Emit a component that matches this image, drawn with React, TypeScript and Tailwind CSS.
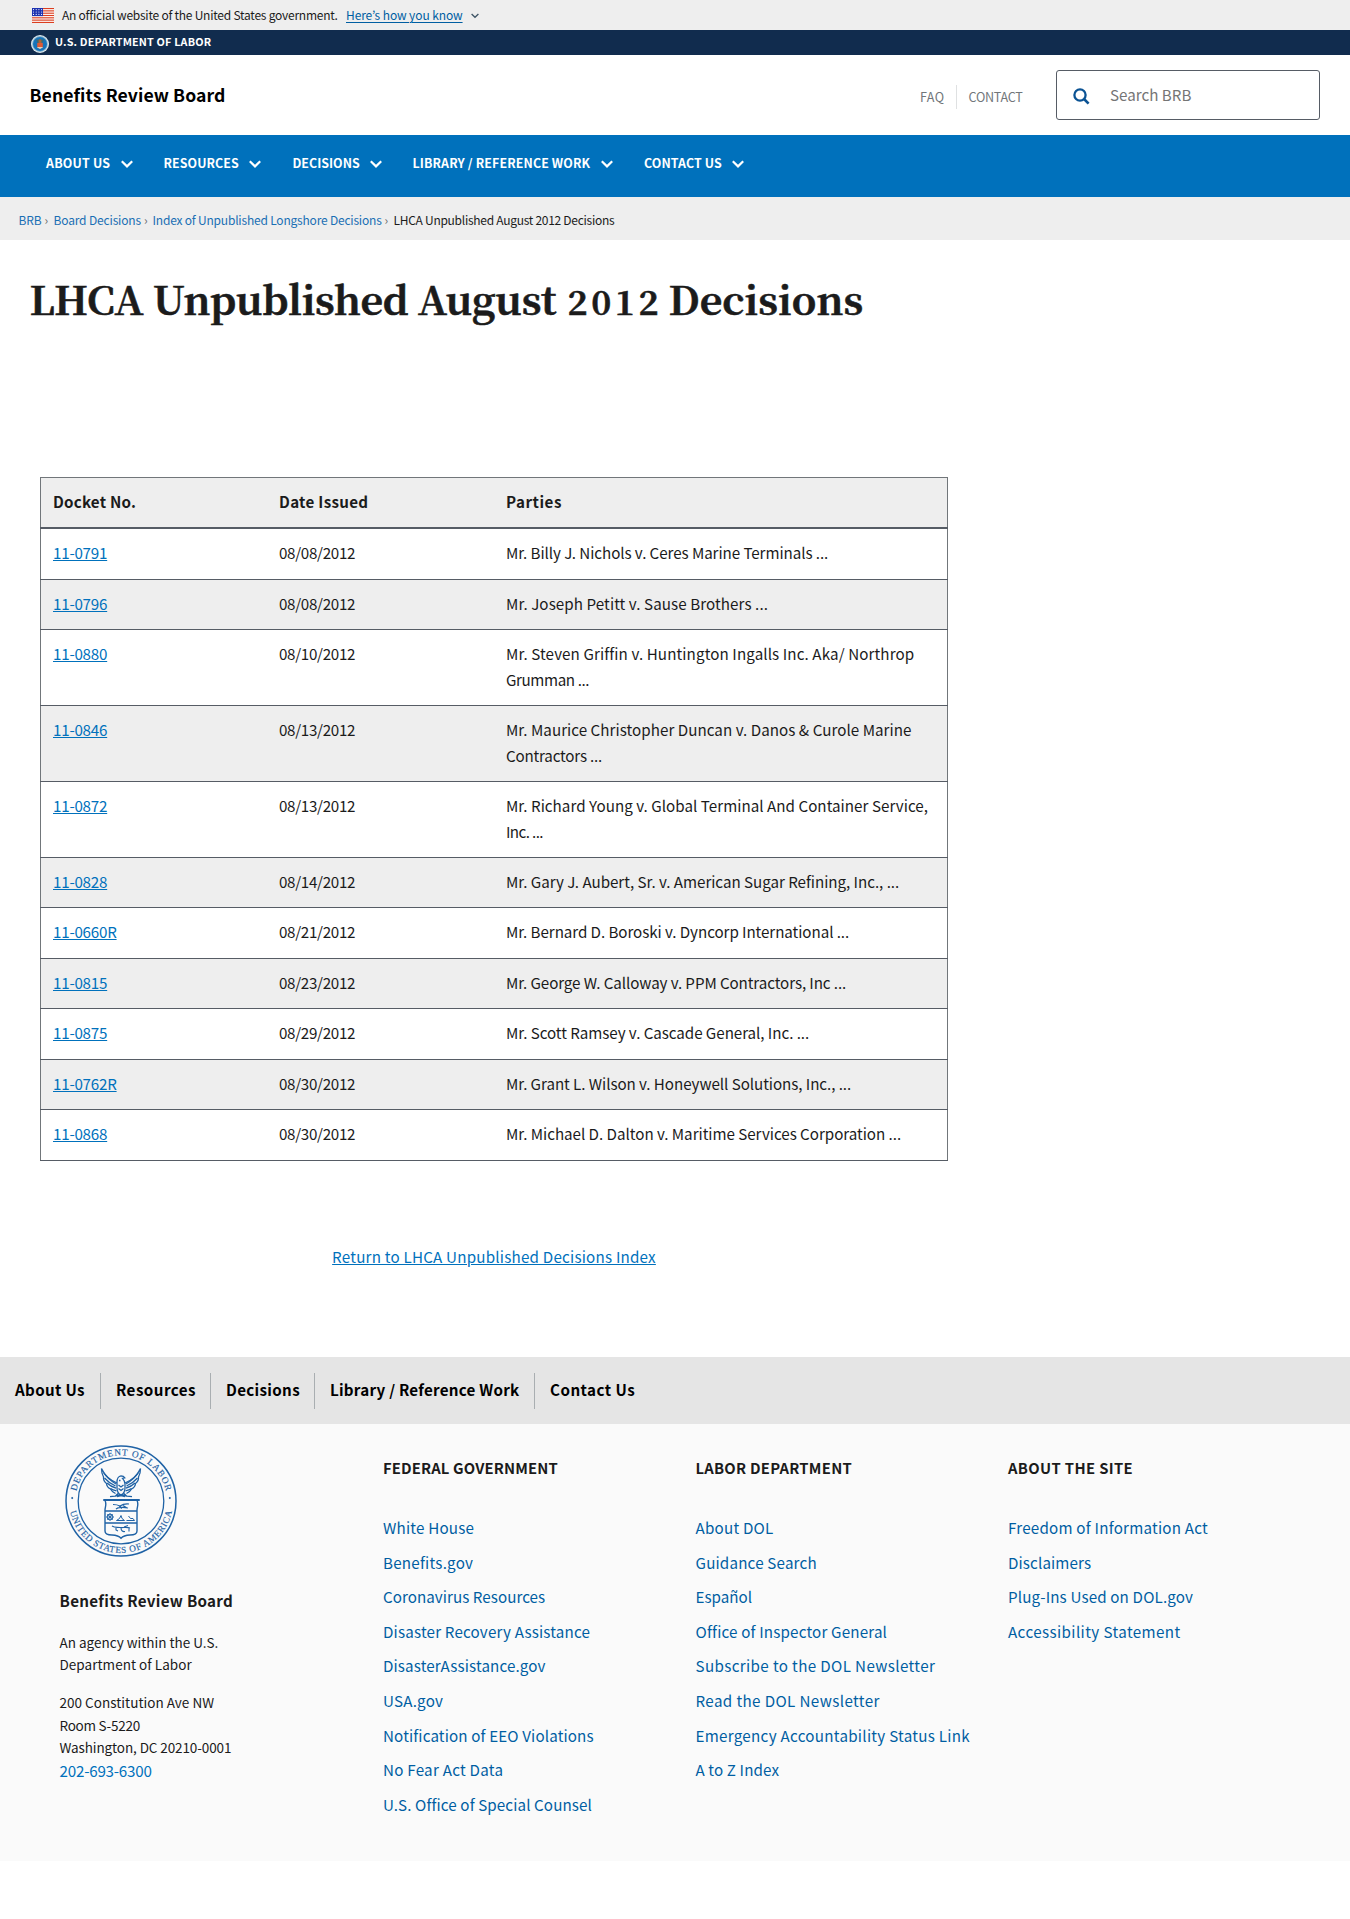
const SANS = "font-['Noto_Sans_CJK_JP','Noto_Sans',sans-serif]";

const mainNav = [
  { label: "ABOUT US", width: "w-[117.5px]", tracking: "tracking-[0.2px]" },
  { label: "RESOURCES", width: "w-[129px]", tracking: "tracking-[0.08px]" },
  { label: "DECISIONS", width: "w-[120px]", tracking: "tracking-[0.02px]" },
  { label: "LIBRARY / REFERENCE WORK", width: "w-[231.5px]", tracking: "tracking-[0.13px]" },
  { label: "CONTACT US", width: "w-[120px]", tracking: "tracking-[0.1px]" },
];

const docketTracking = "tracking-[-0.23px]";

const decisions = [
  { docket: "11-0791", date: "08/08/2012", lines: [["Mr. Billy J. Nichols v. Ceres Marine Terminals ...", "tracking-[-0.07px]"]] },
  { docket: "11-0796", date: "08/08/2012", lines: [["Mr. Joseph Petitt v. Sause Brothers ...", "tracking-[0.075px]"]] },
  {
    docket: "11-0880",
    date: "08/10/2012",
    lines: [
      ["Mr. Steven Griffin v. Huntington Ingalls Inc. Aka/ Northrop", "tracking-[0.1px]"],
      ["Grumman ...", "tracking-[-0.4px]"],
    ],
  },
  {
    docket: "11-0846",
    date: "08/13/2012",
    lines: [
      ["Mr. Maurice Christopher Duncan v. Danos & Curole Marine", "tracking-[0.036px]"],
      ["Contractors ...", "tracking-[-0.2px]"],
    ],
  },
  {
    docket: "11-0872",
    date: "08/13/2012",
    lines: [
      ["Mr. Richard Young v. Global Terminal And Container Service,", "tracking-[0.03px]"],
      ["Inc. ...", "tracking-[-0.6px]"],
    ],
  },
  { docket: "11-0828", date: "08/14/2012", lines: [["Mr. Gary J. Aubert, Sr. v. American Sugar Refining, Inc., ...", "tracking-[-0.036px]"]] },
  { docket: "11-0660R", date: "08/21/2012", lines: [["Mr. Bernard D. Boroski v. Dyncorp International ...", "tracking-[-0.07px]"]] },
  { docket: "11-0815", date: "08/23/2012", lines: [["Mr. George W. Calloway v. PPM Contractors, Inc ...", "tracking-[-0.097px]"]] },
  { docket: "11-0875", date: "08/29/2012", lines: [["Mr. Scott Ramsey v. Cascade General, Inc. ...", "tracking-[-0.052px]"]] },
  { docket: "11-0762R", date: "08/30/2012", lines: [["Mr. Grant L. Wilson v. Honeywell Solutions, Inc., ...", "tracking-[-0.061px]"]] },
  { docket: "11-0868", date: "08/30/2012", lines: [["Mr. Michael D. Dalton v. Maritime Services Corporation ...", "tracking-[-0.03px]"]] },
];

const footerNav = [
  { label: "About Us", width: "w-[101px]", tracking: "tracking-[0.32px]" },
  { label: "Resources", width: "w-[110px]", tracking: "tracking-[0.45px]" },
  { label: "Decisions", width: "w-[104px]", tracking: "tracking-[0.32px]" },
  { label: "Library / Reference Work", width: "w-[220px]", tracking: "tracking-[0.24px]" },
  { label: "Contact Us", width: "w-[110px]", tracking: "tracking-[0.47px]" },
];

const footerColumns = [
  {
    title: "FEDERAL GOVERNMENT",
    tracking: "tracking-[0.156px]",
    links: [
      ["White House", "tracking-[0.2px]"],
      ["Benefits.gov", "tracking-[0.23px]"],
      ["Coronavirus Resources", "tracking-[0.044px]"],
      ["Disaster Recovery Assistance", "tracking-[0.176px]"],
      ["DisasterAssistance.gov", "tracking-[0.122px]"],
      ["USA.gov", "tracking-[0.21px]"],
      ["Notification of EEO Violations", "tracking-[0.135px]"],
      ["No Fear Act Data", "tracking-[0.25px]"],
      ["U.S. Office of Special Counsel", "tracking-[0.11px]"],
    ],
  },
  {
    title: "LABOR DEPARTMENT",
    tracking: "tracking-[0.27px]",
    links: [
      ["About DOL", "tracking-[0.22px]"],
      ["Guidance Search", "tracking-[0.18px]"],
      ["Español", "tracking-[0.02px]"],
      ["Office of Inspector General", "tracking-[0.17px]"],
      ["Subscribe to the DOL Newsletter", "tracking-[0.37px]"],
      ["Read the DOL Newsletter", "tracking-[0.38px]"],
      ["Emergency Accountability Status Link", "tracking-[0.275px]"],
      ["A to Z Index", "tracking-[0.12px]"],
    ],
  },
  {
    title: "ABOUT THE SITE",
    tracking: "tracking-[0.36px]",
    links: [
      ["Freedom of Information Act", "tracking-[0.217px]"],
      ["Disclaimers", "tracking-[0.125px]"],
      ["Plug-Ins Used on DOL.gov", "tracking-[0.14px]"],
      ["Accessibility Statement", "tracking-[0.4px]"],
    ],
  },
];

function Flag() {
  return (
    <svg width="22" height="15" viewBox="0 0 22 15" className="shrink-0">
      <rect width="22" height="15" fill="#fff" />
      {[0, 1, 2, 3, 4, 5, 6].map((i) => (
        <rect key={i} y={i * 2.31} width="22" height="1.15" fill="#db3e1f" />
      ))}
      <rect width="11" height="8.1" fill="#1e33b1" />
      {[1.6, 4, 6.4].map((y) =>
        [1.5, 4.2, 6.9, 9.6].map((x) => <circle key={`${x}-${y}`} cx={x} cy={y} r="0.55" fill="#fff" />),
      )}
    </svg>
  );
}

function SmallSeal() {
  return (
    <svg width="18" height="18" viewBox="0 0 18 18" className="shrink-0">
      <circle cx="9" cy="9" r="9" fill="#dfe9ee" />
      <circle cx="9" cy="9" r="7.9" fill="#8ab6cf" />
      <circle cx="9" cy="9" r="7" fill="#1673b9" />
      <path d="M5 4.2 7.3 5 9 3.8l1.7 1.2L13 4.2 11.4 8H6.6z" fill="#3d6a72" />
      <path d="M7.8 4.6h2.4l.4 3.6H7.4z" fill="#a5653a" />
      <path d="M6.2 8h5.6v4.3L9 13.8l-2.8-1.5z" fill="#dd5a35" />
      <path d="M6.2 12h5.6v.6L9 14l-2.8-1.4z" fill="#d9d3c4" />
    </svg>
  );
}

function Chevron() {
  return (
    <svg width="12" height="8" viewBox="0 0 12 8" fill="none" className="shrink-0">
      <path d="M.8 1.300 6 6.400l5.200-5.100" stroke="#fff" strokeWidth="2.200" />
    </svg>
  );
}

function DepartmentSeal() {
  return (
    <svg width="112" height="112" viewBox="-56 -56 112 112" fill="none" stroke="#1f62a5" strokeWidth="1" className="block">
      <circle r="55" strokeWidth="1.5" />
      <circle r="42.8" strokeWidth="1.3" />
      <defs>
        <path id="seal-top" d="M-45.8 0A45.8 45.8 0 0 1 45.8 0" />
        <path id="seal-bottom" d="M-52 0A52 52 0 0 0 52 0" />
      </defs>
      <g fill="#1f62a5" stroke="#1f62a5" strokeWidth=".15" fontSize="9.2" fontFamily="'Liberation Serif', serif">
        <text textAnchor="middle" textLength="124" lengthAdjust="spacing">
          <textPath href="#seal-top" startOffset="50%" textLength="124" lengthAdjust="spacing">DEPARTMENT OF LABOR</textPath>
        </text>
        <text textAnchor="middle" textLength="142" lengthAdjust="spacing">
          <textPath href="#seal-bottom" startOffset="50%" textLength="142" lengthAdjust="spacing">UNITED STATES OF AMERICA</textPath>
        </text>
        <circle cx="-48.8" cy="-3" r="0.9" />
        <circle cx="48.8" cy="-3" r="0.9" />
      </g>
      {/* eagle */}
      <g strokeWidth="1.300">
        <path d="M-4-18C-9-20-16-25-19.500-32.500c0 4 .8 6.500 2 8.500-.2 2.500 1 5 3 6.500.2 2.500 1.800 4.500 4 5.500 1.200 2.500 3 3.500 5 4.500" />
        <path d="M4-18C9-20 16-25 19.500-32.500c0 4-.8 6.500-2 8.500.2 2.500-1 5-3 6.500-.2 2.500-1.800 4.500-4 5.500-1.200 2.500-3 3.500-5 4.500" />
        <path d="M-17.500-28.500C-14-23-10-20-5-17M-16.500-23c3 3.500 6.500 6 11 8M-14-18c2.500 2.500 5.500 4 9 5.200M-10.500-12.500c2 1.500 4 2 6 2.300M17.500-28.500C14-23 10-20 5-17M16.500-23c-3 3.500-6.500 6-11 8M14-18c-2.500 2.500-5.500 4-9 5.200M10.500-12.500c-2 1.500-4 2-6 2.300" />
        <path d="M-4-19c0-3 1.500-6 4-6.200 1.600 0 3 .7 3.800 2l-2.300.6c1.500 1.600 2.500 3 2.500 5.600v4c0 3-1.800 6-4 7.500-2.200-1.500-4-4.500-4-7.500zM-2.500-16l2.500 2 2.500-2M-2.500-12.500l2.500 2 2.500-2M-2-20.500h1.500" fill="#fafafa" />
        <path d="M-3-7.500-6-4.500M3-7.500l3 3M-11-4.300l5-.5L0-6.500l6 1.700 5 .5M-4-4.500l4-1 4 1" />
      </g>
      {/* shield */}
      <path d="M-17.500-.5v-1h36v1z" />
      <path d="M-16-.5C-14 3-16 6-16 9v21c0 3 3 4 7 4 4 .2 7 1 9 3.200 2-2.200 5-3 9-3.200 4 0 7-1 7-4V9c0-3 2-6 0-9.500M-16 10h32M-16 22h32" strokeWidth="1.400" />
      <path d="M-8 3.500c3 0 5 .5 7 1.500 3-2 5-2.500 9-2M-5 8c2-2 8-2 12-1M-2 5l3 2.500M2 4.500 6 7" strokeWidth="1.100" />
      <circle cx="-11" cy="16" r="2.900" />
      <path d="M-11 12v8M-15 16h8M-13.800 13.200l5.600 5.600M-8.200 13.200l-5.600 5.600" strokeWidth=".8" />
      <path d="M-4.500 19.500h8l-2.500-2-1-3-1.500 3zM5.500 19.500h8l-1.500-2H9.500l-2-2.500" />
      <path d="M-9 25c3 2 5 1 8 1.500s6-1 10 .5M-5 26v3l2 1M0 27c0 3 2 4 4 3.500M8 27v3.500M3 26l4-1.500" strokeWidth="1.100" />
    </svg>
  );
}

export default function App() {
  return (
    <div className={`${SANS} min-h-[1919px] w-[1350px] overflow-hidden bg-white text-[15.18px] leading-[25.44px] text-[#1b1b1b]`}>
      {/* government banner */}
      <div className="flex h-[30px] items-center bg-[#eeeeee] pl-8 text-xs leading-[30px]">
        <Flag />
        <span className="ml-2 w-[284px] whitespace-nowrap tracking-[-0.24px]">An official website of the United States government.</span>
        <a className="whitespace-nowrap tracking-[-0.1px] text-[#005ea2] underline decoration-1 underline-offset-2">Here’s how you know</a>
        <svg width="8" height="6" viewBox="0 0 8 6" fill="none" className="mt-[2px] ml-2">
          <path d="M.6 1 4 4.300 7.400 1" stroke="#3f5566" strokeWidth="1.300" />
        </svg>
      </div>
      <div className="flex h-[25px] bg-[#112c4e] pl-[31px] text-[10.8px] font-bold text-white">
        <div className="pt-[5px]"><SmallSeal /></div>
        <span className="ml-1.5 leading-[23px] tracking-[0.17px]">U.S. DEPARTMENT OF LABOR</span>
      </div>

      {/* site header */}
      <header className="flex h-20 items-center pr-[30px] pl-[29.500px]">
        <div className="flex-1 text-[17.6px] font-bold tracking-[0.09px] text-black">Benefits Review Board</div>
        <div className="mt-1 flex items-center text-[12.6px] text-[#71767a]">
          <span className="w-[35.500px] tracking-[0.4px]">FAQ</span>
          <span className="h-6 border-l border-[#dfe1e2]" />
          <span className="ml-3 w-[87.500px] tracking-[-0.25px]">CONTACT</span>
        </div>
        <div className="flex h-[50px] w-[264px] items-center rounded-[3px] border border-[#565c65] text-[#757575]">
          <svg width="17" height="17" viewBox="0 0 17 17" fill="none" className="mt-[3px] ml-4">
            <circle cx="7" cy="7" r="5.600" stroke="#0b5394" strokeWidth="2.300" />
            <path d="m11 11 4.600 4.600" stroke="#0b5394" strokeWidth="2.600" />
          </svg>
          <span className="mb-px ml-5">Search BRB</span>
        </div>
      </header>

      <nav className="flex h-[62px] bg-[#0071bc] pl-[46px] text-[12.4px] font-bold text-white">
        {mainNav.map((n) => (
          <div key={n.label} className={`${n.width} flex h-[57px] items-center`}>
            <span className={`${n.tracking} whitespace-nowrap`}>{n.label}</span>
            <span className="ml-[10.500px]"><Chevron /></span>
          </div>
        ))}
      </nav>

      {/* breadcrumb */}
      <div className="flex h-[43px] bg-[#eeeeee] pl-[18.500px] text-xs leading-[45.500px] whitespace-nowrap">
        <a className="w-[26px] tracking-[-0.1px] text-[#1a6fb4]">BRB</a>
        <span className="w-[9px] text-[#6b6b6b]">›</span>
        <a className="w-[90.500px] tracking-[-0.157px] text-[#1a6fb4]">Board Decisions</a>
        <span className="w-[8.500px] text-[#6b6b6b]">›</span>
        <a className="w-[232px] tracking-[-0.2px] text-[#1a6fb4]">Index of Unpublished Longshore Decisions</a>
        <span className="w-[9px] text-[#6b6b6b]">›</span>
        <span className="tracking-[-0.275px]">LHCA Unpublished August 2012 Decisions</span>
      </div>

      <main className="h-[1117px] pt-[29.500px]">
        <h1 className="flex h-[60.500px] items-baseline pl-[29.500px] font-['Noto_Serif_CJK_SC','DejaVu_Serif_Condensed',serif] text-[39.5px] leading-[56px] font-bold whitespace-nowrap [-webkit-text-stroke:0.6px_#1b1b1b]">
          <span className="w-[538px] tracking-[-0.4px]">LHCA Unpublished August</span>
          <span className="w-[101px] text-[34px] tracking-[3.6px]">2012</span>
          <span>Decisions</span>
        </h1>

        <table className="mt-[147px] ml-10 w-[908px] table-fixed border-collapse border border-[#71767a] text-left">
          <thead>
            <tr className="border-b-2 border-[#565c65] bg-[#eeeeee]">
              <th className="w-[226.500px] px-3 pt-[11px] pb-[13px] font-bold tracking-[0.2px]">Docket No.</th>
              <th className="w-[227px] px-3 pt-[11px] pb-[13px] font-bold tracking-[0.3px]">Date Issued</th>
              <th className="px-3 pt-[11px] pb-[13px] font-bold tracking-[0.5px]">Parties</th>
            </tr>
          </thead>
          <tbody>
            {decisions.map((d) => (
              <tr key={d.docket} className="border-b border-[#565c65] align-top even:bg-[#eeeeee]">
                <td className="px-3 pt-[11px] pb-[13px]">
                  <a className={`${docketTracking} text-[#0071bc] underline decoration-1 underline-offset-[1px]`}>{d.docket}</a>
                </td>
                <td className="px-3 pt-[11px] pb-[13px] tracking-[-0.31px]">{d.date}</td>
                <td className="px-3 pt-[11px] pb-[13px] whitespace-nowrap">
                  {d.lines.map(([text, tracking]) => (
                    <div key={text} className={tracking}>{text}</div>
                  ))}
                </td>
              </tr>
            ))}
          </tbody>
        </table>

        <div className="mt-[83px] w-[988px] text-center">
          <a className="tracking-[0.21px] text-[#0071bc] underline decoration-1 underline-offset-[1px]">Return to LHCA Unpublished Decisions Index</a>
        </div>
      </main>

      <footer>
        <div className="flex h-[67px] items-center bg-[#e5e5e5] font-bold text-black">
          {footerNav.map((n, i) => (
            <div
              key={n.label}
              className={`${n.width} ${n.tracking} ${i < 4 ? "border-r border-[#a9aeb1]" : ""} h-9 pl-[15px] leading-[33px] whitespace-nowrap`}
            >
              {n.label}
            </div>
          ))}
        </div>

        <div className="flex h-[437px] bg-[#fafafa]">
          <div className="w-[383px] pt-[21px] pl-[59.500px]">
            <div className="pl-[5px]"><DepartmentSeal /></div>
            <div className="mt-[31px] font-bold tracking-[0.3px]">Benefits Review Board</div>
            <div className="mt-[18px] text-[13.5px] leading-[22px]">
              <div>An agency within the U.S.</div>
              <div className="tracking-[0.04px]">Department of Labor</div>
            </div>
            <div className="mt-4 text-[13.5px] leading-[22.3px]">
              <div className="tracking-[0.02px]">200 Constitution Ave NW</div>
              <div className="tracking-[-0.24px]">Room S-5220</div>
              <div className="tracking-[-0.1px]">Washington, DC 20210-0001</div>
            </div>
            <a className="block leading-6 tracking-[-0.21px] text-[#0071bc]">202-693-6300</a>
          </div>
          {footerColumns.map((c) => (
            <div key={c.title} className="w-[312.500px] pt-[31px] whitespace-nowrap">
              <div className={`${c.tracking} text-[14.8px] font-bold`}>{c.title}</div>
              <ul className="mt-[29.500px]">
                {c.links.map(([label, tracking]) => (
                  <li key={label} className={`${tracking} h-[34.630px] leading-[34.630px] text-[#005ea2]`}>{label}</li>
                ))}
              </ul>
            </div>
          ))}
        </div>
      </footer>
    </div>
  );
}
